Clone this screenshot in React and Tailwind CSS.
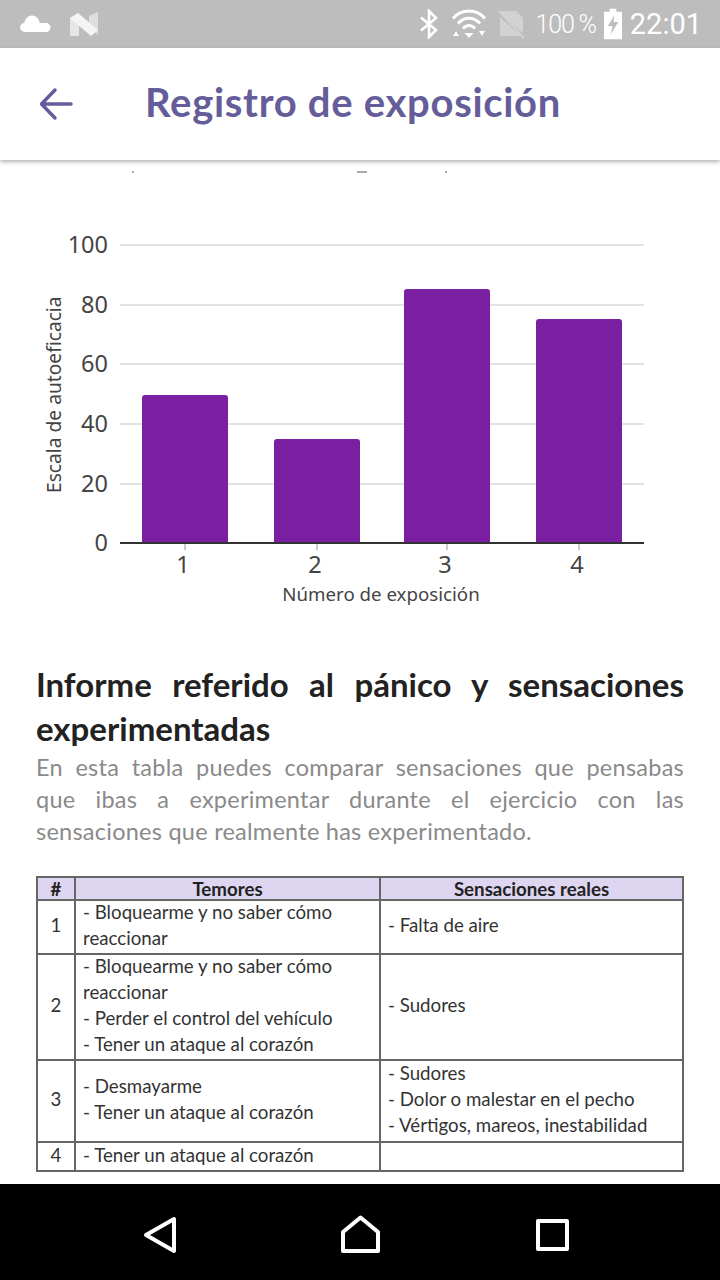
import React from 'react';

const bars = [
    { label: '1', x: 142, w: 86, y: 395 },
    { label: '2', x: 274, w: 86, y: 439 },
    { label: '3', x: 404, w: 86, y: 289 },
    { label: '4', x: 536, w: 86, y: 319 },
];

const ticks = [
    { label: '100', y: 245 },
    { label: '80', y: 305 },
    { label: '60', y: 364 },
    { label: '40', y: 424 },
    { label: '20', y: 484 },
    { label: '0', y: 543 },
];

const rows = [
    {
        n: '1',
        fears: ['- Bloquearme y no saber cómo reaccionar'],
        real: ['- Falta de aire'],
        h: 'h-[53px]',
    },
    {
        n: '2',
        fears: ['- Bloquearme y no saber cómo reaccionar', '- Perder el control del vehículo', '- Tener un ataque al corazón'],
        real: ['- Sudores'],
        h: 'h-[106px]',
    },
    {
        n: '3',
        fears: ['- Desmayarme', '- Tener un ataque al corazón'],
        real: ['- Sudores', '- Dolor o malestar en el pecho', '- Vértigos, mareos, inestabilidad'],
        h: 'h-[82px]',
    },
    {
        n: '4',
        fears: ['- Tener un ataque al corazón'],
        real: [],
        h: 'h-[29px]',
    },
];

const StatusBar = () => (
    <div className="h-12 shrink-0 bg-[#bdbdbd] flex items-center pl-5 pr-[18px] text-white">
        <svg width="32" height="20" viewBox="0 0 32 20" fill="#fff">
            <path d="M5 19a4.600 4.600 0 0 1-.6-9.200C5.500 5 8.500 2.500 12 2.500c3.800 0 7 2.800 7.800 7.700 .5-.1 1-.2 1.200-.2h3.500a4.600 4.600 0 0 1 2.500 9H5z" transform="translate(0 -1)" />
        </svg>
        <svg className="ml-[18px]" width="30" height="26" viewBox="0 0 30 26">
            <path d="M0 7 9 2V25L0 25Z" fill="#e6e6e6" />
            <path d="M19 5 28 1V24L19 16Z" fill="#dedede" />
            <path d="M0 7 8 2 28 19 21 25Z" fill="#f4f4f4" />
        </svg>
        <div className="flex-1" />
        <svg width="20" height="30" viewBox="0 0 20 30" fill="none" stroke="#fff" strokeWidth="2.600">
            <path d="M2 8.500 17 21 10 28V2L17 9 2 21.500" />
        </svg>
        <svg className="ml-[12px]" width="36" height="30" viewBox="0 0 36 30">
            <path d="M2 9.500C10-.5 26-.5 34 9.500" fill="none" stroke="#fff" strokeWidth="3" />
            <path d="M7 14.500C13 7.500 23 7.500 29 14.500" fill="none" stroke="#fff" strokeWidth="3" />
            <path d="M12 19.500C15.500 15.500 20.500 15.500 24 19.500" fill="none" stroke="#fff" strokeWidth="3" />
            <path d="M13.500 24h9L18 29Z M2 27l3-5 3 5Z M28 22h6l-3 5Z" fill="#fff" />
        </svg>
        <svg className="ml-[11px]" width="28" height="30" viewBox="0 0 28 30">
            <path d="M2 4a2 2 0 0 1 2-2H18L25 9V24L2 4Z M2 8 23 27H4a2 2 0 0 1-2-2Z" fill="#d2d2d2" />
            <path d="M1 2 26 29" stroke="#d2d2d2" strokeWidth="2" />
        </svg>
        <span className="ml-[10px] text-[25px] leading-none font-['Roboto',sans-serif] font-light tracking-[-1.200px]">100 %</span>
        <svg className="ml-[8px]" width="18" height="32" viewBox="0 0 19 32">
            <path d="M6 0H13V3H19V32H0V3H6Z M11 7 4 18H9L7 27 15 14H10Z" fill="#fff" fillRule="evenodd" />
        </svg>
        <span className="ml-[8px] text-[29px] leading-none font-['Roboto',sans-serif] font-normal">22:01</span>
    </div>
);

const Header = () => (
    <div className="relative z-10 h-28 shrink-0 bg-white flex items-center shadow-[0_2px_4px_rgba(0,0,0,0.3)]">
        <svg className="ml-[39px]" width="34" height="34" viewBox="0 0 34 34" fill="none" stroke="#655d99" strokeWidth="3.500" strokeLinecap="round" strokeLinejoin="round">
            <path d="M32 17H3M16 3 2.500 17 16 31" />
        </svg>
        <h1 className="ml-[72px] mt-[-4px] text-[40px] leading-none font-bold tracking-[0.7px] text-[#655d99]">Registro de exposición</h1>
    </div>
);

const Chart = () => (
    <svg className="block absolute left-0 top-0" width="720" height="620" viewBox="0 160 720 620">
        {ticks.map((t) => (
            <g key={t.label}>
                {t.label !== '0' && <line x1="120" x2="644" y1={t.y} y2={t.y} stroke="#e2e2e2" strokeWidth="2" />}
                <text x="108" y={t.y + 8} textAnchor="end" fontSize="23.500" fill="#444" fontFamily="Noto Sans">{t.label}</text>
            </g>
        ))}
        {bars.map((b) => (
            <g key={b.label}>
                <path d={`M${b.x} 543V${b.y + 3}a3 3 0 0 1 3-3H${b.x + b.w - 3}a3 3 0 0 1 3 3V543Z`} fill="#7b1fa2" />
                <line x1={b.x + b.w / 2} x2={b.x + b.w / 2} y1="544" y2="550" stroke="#bbb" strokeWidth="1.500" />
                <text x={b.x + b.w / 2 - 2} y="573" textAnchor="middle" fontSize="23.500" fill="#444" fontFamily="Noto Sans">{b.label}</text>
            </g>
        ))}
        <line x1="120" x2="644" y1="543" y2="543" stroke="#333" strokeWidth="2" />
        <text x="381" y="601" textAnchor="middle" fontSize="18.700" fill="#444" fontFamily="Noto Sans">Número de exposición</text>
        <text transform="translate(61 493) rotate(-90)" fontSize="19.200" fill="#444" fontFamily="Noto Sans">Escala de autoeficacia</text>
    </svg>
);

const ExposureTable = () => (
    <table className="w-[646px] table-fixed border-collapse text-[18.700px] leading-[26px] text-[#333]">
        <colgroup>
            <col className="w-[38px]" />
            <col className="w-[305px]" />
            <col className="w-[303px]" />
        </colgroup>
        <thead className="bg-[#ded5f0] text-[#222]">
            <tr className="h-[23px]">
                <th className="border-2 border-[#666] font-bold leading-[18px] py-0">#</th>
                <th className="border-2 border-[#666] font-bold leading-[18px] py-0">Temores</th>
                <th className="border-2 border-[#666] font-bold leading-[18px] py-0">Sensaciones reales</th>
            </tr>
        </thead>
        <tbody>
            {rows.map((row) => (
                <tr key={row.n} className={row.h}>
                    <td className="border-2 border-[#666] text-center p-0">
                        <div className="-translate-y-[2px]">{row.n}</div>
                    </td>
                    <td className="border-2 border-[#666] px-[7px] py-0">
                        <div className="-translate-y-[2px]">
                            {row.fears.map((f) => (
                                <div key={f}>{f}</div>
                            ))}
                        </div>
                    </td>
                    <td className="border-2 border-[#666] px-[7px] py-0">
                        <div className="-translate-y-[2px]">
                            {row.real.map((r) => (
                                <div key={r}>{r}</div>
                            ))}
                        </div>
                    </td>
                </tr>
            ))}
        </tbody>
    </table>
);

const NavBar = () => (
    <div className="h-24 shrink-0 bg-black flex items-center pl-[141px] pt-[6px]">
        <svg width="36" height="38" viewBox="0 0 36 38" fill="none" stroke="#fff" strokeWidth="4" strokeLinejoin="round">
            <path d="M33 3V35L5 19Z" />
        </svg>
        <svg className="ml-[162px]" width="44" height="42" viewBox="0 0 44 42" fill="none" stroke="#fff" strokeWidth="4" strokeLinejoin="round">
            <path d="M21.500 3.500 39 18V37H4V18Z" />
        </svg>
        <svg className="ml-[151px]" width="36" height="36" viewBox="0 0 36 36" fill="none" stroke="#fff" strokeWidth="4" strokeLinejoin="round">
            <rect x="4" y="4" width="29" height="28" />
        </svg>
    </div>
);

const App = () => {
    return (
        <div className="relative w-[720px] h-[1280px] flex flex-col overflow-hidden bg-white font-['Lato',sans-serif]">
            <StatusBar />
            <Header />
            <div className="relative flex-1 overflow-hidden">
                {/* tails of the line scrolled away under the header */}
                <div className="absolute left-[132px] top-[11px] w-[2px] h-[2px] bg-[#aaa]" />
                <div className="absolute left-[357px] top-[11px] w-[10px] h-[2px] bg-[#aaa]" />
                <div className="absolute left-[445px] top-[11px] w-[2px] h-[2px] bg-[#aaa]" />
                <Chart />
                <div className="px-9 pt-[502px]">
                    <h2 className="text-[33px] leading-[44px] font-bold text-[#222] text-justify">
                        Informe referido al pánico y sensaciones experimentadas
                    </h2>
                    <p className="text-[23.500px] tracking-[0.25px] leading-8 text-[#8a8a8a] text-justify mt-[1px]">
                        En esta tabla puedes comparar sensaciones que pensabas que ibas a experimentar durante el ejercicio con las sensaciones que realmente has experimentado.
                    </p>
                    <div className="mt-[29px]">
                        <ExposureTable />
                    </div>
                </div>
            </div>
            <NavBar />
        </div>
    );
};

export default App;
